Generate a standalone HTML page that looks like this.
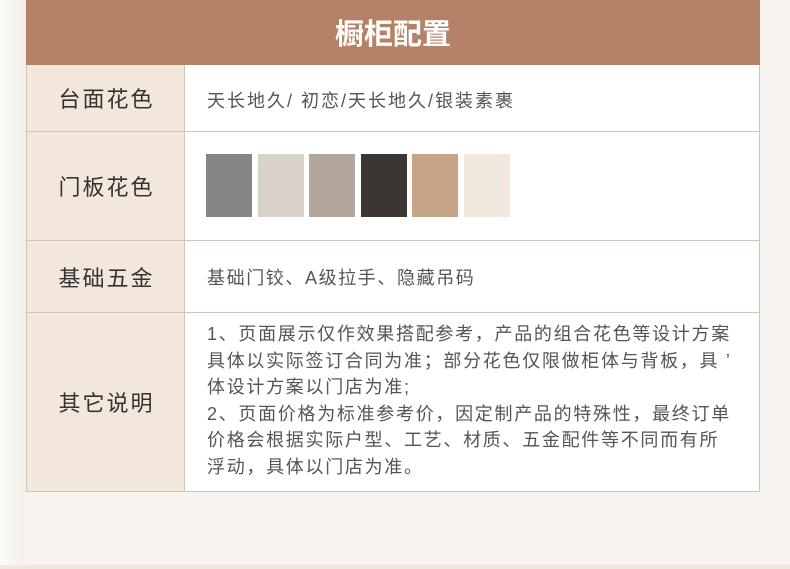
<html><head><style>
*{box-sizing:border-box}
body{margin:0;width:790px;height:569px;background:#f7f3ee;position:relative;overflow:hidden;font-family:"Liberation Sans","Noto Sans CJK SC",sans-serif}
.strip{position:absolute;left:0;top:0;width:26px;height:569px;background:linear-gradient(90deg,#fbfaf8,#f3efe9)}
.bot{position:absolute;left:0;top:565px;width:790px;height:4px;background:#f1e7db}
.hd{position:absolute;left:26px;top:0;width:734px;height:66px;background:#b58268;color:#fff;font-size:29px;text-align:center;line-height:70px;font-weight:bold}
.row{position:absolute;left:26px;width:734px;border:1px solid #cfc5b7;background:#fff}
.l{position:absolute;left:0;top:0;bottom:0;width:158px;background:#f2e7da;border-right:1px solid #cfc5b7;display:flex;align-items:center;justify-content:center;font-size:22px;color:#333;letter-spacing:2px;padding-left:2px}
.r{position:absolute;left:180px;font-size:18px;color:#555;letter-spacing:2px}
.sw{position:absolute;top:22px;width:46px;height:63px}
</style></head><body>
<div class="strip"></div><div class="bot"></div>
<div class="hd">橱柜配置</div>
<div class="row" style="top:65px;height:67px;border-top:none"><div class="l">台面花色</div><div class="r" style="top:22px">天长地久/ 初恋/天长地久/银装素裹</div></div>
<div class="row" style="top:131px;height:110px"><div class="l">门板花色</div>
<div class="sw" style="left:179px;background:#858585"></div>
<div class="sw" style="left:231px;background:#d8d2c8"></div>
<div class="sw" style="left:282px;background:#b2a69d"></div>
<div class="sw" style="left:334px;background:#3b3631"></div>
<div class="sw" style="left:385px;background:#c6a488"></div>
<div class="sw" style="left:437px;background:#f1e7dd"></div>
</div>
<div class="row" style="top:240px;height:73px"><div class="l">基础五金</div><div class="r" style="top:23px;letter-spacing:1.6px">基础门铰、A级拉手、隐藏吊码</div></div>
<div class="row" style="top:312px;height:180px"><div class="l">其它说明</div><div class="r" style="top:8px;line-height:26.5px;width:560px;white-space:nowrap;letter-spacing:1.7px">1、页面展示仅作效果搭配参考，产品的组合花色等设计方案<br>具体以实际签订合同为准；部分花色仅限做柜体与背板，具 ’<br>体设计方案以门店为准;<br>2、页面价格为标准参考价，因定制产品的特殊性，最终订单<br>价格会根据实际户型、工艺、材质、五金配件等不同而有所<br>浮动，具体以门店为准。</div></div>
</body></html>
